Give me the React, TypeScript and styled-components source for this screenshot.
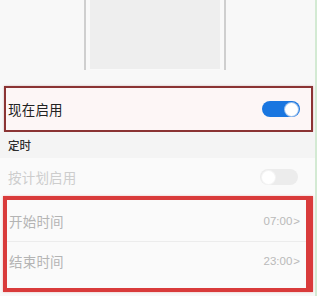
import React from "react";
import styled, { createGlobalStyle } from "styled-components";

const Global = createGlobalStyle`
  html, body { margin: 0; padding: 0; background: #ffffff; }
  body { font-family: "Noto Sans CJK SC", "Noto Sans", sans-serif; }
`;

const Screen = styled.div`
  width: 315px;
  height: 296px;
  background: #f8f8f8;
  border-right: 2px solid #d3ead3;
  display: flex;
  flex-direction: column;
  overflow: hidden;
`;

const PreviewArea = styled.div`
  height: 86px;
  display: flex;
  justify-content: center;
  padding-right: 5px;
  box-sizing: border-box;
`;

const PreviewFrame = styled.div`
  width: 142px;
  height: 70px;
  box-sizing: border-box;
  border-left: 2px solid #cfcfcf;
  border-right: 2px solid #cfcfcf;
  padding: 0 4px;
  background: #f9f9f9;
`;

const PreviewInner = styled.div`
  height: 69px;
  background: #eeeeee;
`;

const Highlight = styled.div<{ $color: string; $w: number; $wr?: number; $pb?: number }>`
  margin-left: ${(p) => (p.$w > 3 ? 3 : 4)}px;
  width: ${(p) => (p.$w > 3 ? 310 : 309)}px;
  box-sizing: border-box;
  border: ${(p) => p.$w}px solid ${(p) => p.$color};
  border-right-width: ${(p) => p.$wr ?? p.$w}px;
  box-shadow: 0 0 2px ${(p) => p.$color}55;
  display: flex;
  flex-direction: column;
  padding-bottom: ${(p) => p.$pb ?? 0}px;
  background: #fafafa;
  flex-shrink: 0;
`;

const Row = styled.div<{ $h: number; $bg?: string; $divider?: boolean; $pr?: number }>`
  height: ${(p) => p.$h}px;
  display: flex;
  align-items: center;
  justify-content: space-between;
  padding: 0 ${(p) => p.$pr ?? 9}px 0 2px;
  background: ${(p) => p.$bg ?? "transparent"};
  border-bottom: ${(p) => (p.$divider ? "1px solid #ececec" : "none")};
  box-sizing: border-box;
  flex-shrink: 0;
`;

const Label = styled.span<{ $color: string; $size?: number }>`
  font-size: ${(p) => p.$size ?? 13.5}px;
  color: ${(p) => p.$color};
  letter-spacing: 0.2px;
`;

const Header = styled.div`
  height: 26px;
  display: flex;
  align-items: center;
  padding-left: 8px;
  background: #f4f4f4;
  font-size: 11.5px;
  font-weight: 500;
  color: #2e2e2e;
  flex-shrink: 0;
`;

const PlainRow = styled.div`
  height: 38px;
  display: flex;
  align-items: center;
  justify-content: space-between;
  padding: 0 17px 0 8px;
  background: #fafafa;
  flex-shrink: 0;
`;

const Toggle = styled.div<{ $on: boolean }>`
  width: 38px;
  height: 16px;
  border-radius: 8px;
  background: ${(p) => (p.$on ? "#1a76e0" : "#ececec")};
  position: relative;
  &::after {
    content: "";
    position: absolute;
    top: 1.5px;
    ${(p) => (p.$on ? "right: 2px;" : "left: 2px;")}
    width: 13px;
    height: 13px;
    border-radius: 50%;
    background: #ffffff;
    box-shadow: 0 0 0 1px ${(p) => (p.$on ? "#9fc3ee" : "#f4f4f4")};
  }
`;

const Value = styled.span`
  font-family: "Liberation Sans", "Noto Sans", sans-serif;
  font-size: 11.5px;
  color: #b9b9b9;
  display: flex;
  align-items: center;
  gap: 1px;
`;

export default function App() {
  return (
    <>
      <Global />
      <Screen>
        <PreviewArea>
          <PreviewFrame>
            <PreviewInner />
          </PreviewFrame>
        </PreviewArea>
        <Highlight $color="#8b3434" $w={2}>
          <Row $h={42} $bg="#fdf6f6" $pr={11}>
            <Label $color="#222222">现在启用</Label>
            <Toggle $on />
          </Row>
        </Highlight>
        <Header>定时</Header>
        <PlainRow>
          <Label $color="#cdcdcd">按计划启用</Label>
          <Toggle $on={false} />
        </PlainRow>
        <Highlight $color="#d93b3b" $w={4} $wr={7} $pb={8}>
          <Row $h={42} $divider $pr={6}>
            <Label $color="#b4b4b4">开始时间</Label>
            <Value>07:00<span>&gt;</span></Value>
          </Row>
          <Row $h={38} $pr={6}>
            <Label $color="#b4b4b4">结束时间</Label>
            <Value>23:00<span>&gt;</span></Value>
          </Row>
        </Highlight>
      </Screen>
    </>
  );
}
